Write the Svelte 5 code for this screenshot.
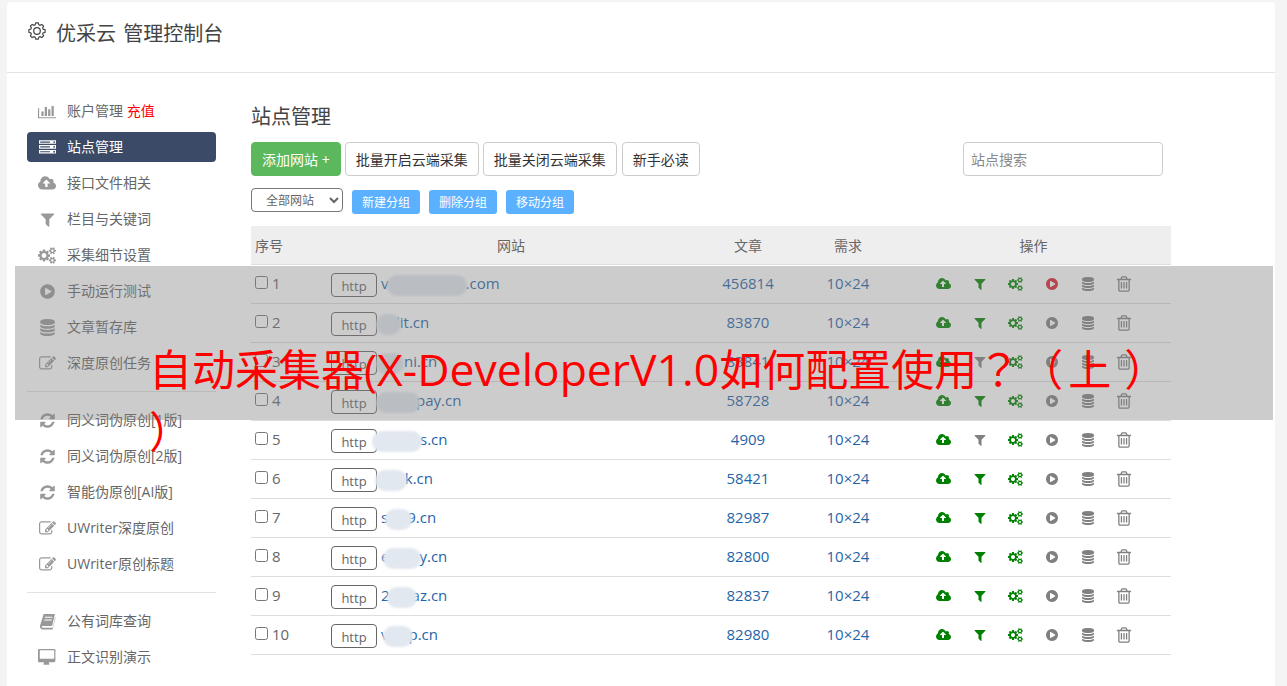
<script>
  const icons = {
    chart: ['0 0 2048 1792', 'M640 896v512h-256v-512h256zm384-512v1024h-256v-1024h256zm1024 1152v128h-2048v-1152h128v1024h1920zm-640-896v768h-256v-768h256zm384-384v1152h-256v-1152h256z'],
    server: ['0 0 1792 1792', 'M128 1408h1024v-128h-1024v128zm0-512h1024v-128h-1024v128zm1568 448q0-40-28-68t-68-28-68 28-28 68 28 68 68 28 68-28 28-68zm-1568-960h1024v-128h-1024v128zm1568 448q0-40-28-68t-68-28-68 28-28 68 28 68 68 28 68-28 28-68zm0-512q0-40-28-68t-68-28-68 28-28 68 28 68 68 28 68-28 28-68zm96 832v384h-1792v-384h1792zm0-512v384h-1792v-384h1792zm0-512v384h-1792v-384h1792z'],
    cloud: ['0 0 1920 1792', 'M1280 864q0-14-9-23l-352-352q-9-9-23-9t-23 9l-351 351q-10 12-10 24 0 14 9 23t23 9h224v352q0 13 9.5 22.5t22.5 9.5h192q13 0 22.5-9.5t9.5-22.5v-352h224q13 0 22.5-9.5t9.5-22.5zm640 288q0 159-112.5 271.5t-271.5 112.5h-1088q-185 0-316.5-131.5t-131.5-316.5q0-130 70-240t188-165q-2-30-2-43 0-212 150-362t362-150q156 0 285.5 87t188.5 231q71-62 166-62 106 0 181 75t75 181q0 76-41 138 130 31 213.5 135.5t83.5 238.5z'],
    filter: ['0 0 1792 1792', 'M1595 295q17 41-14 70l-493 493v742q0 42-39 59-13 5-25 5-27 0-45-19l-256-256q-19-19-19-45v-486l-493-493q-31-29-14-70 17-39 59-39h1280q42 0 59 39z'],
    gears: ['0 0 1920 1792', 'M896 896q0-106-75-181t-181-75-181 75-75 181 75 181 181 75 181-75 75-181zm768 512q0-52-38-90t-90-38-90 38-38 90q0 53 37.5 90.5t90.5 37.5 90.5-37.5 37.5-90.5zm0-1024q0-52-38-90t-90-38-90 38-38 90q0 53 37.5 90.5t90.5 37.5 90.5-37.5 37.5-90.5zm-384 421v185q0 10-7 19.5t-16 10.5l-155 24q-11 35-32 76 34 48 90 115 7 11 7 20 0 12-7 19-23 30-82.5 89.5t-78.5 59.5q-11 0-21-7l-115-90q-37 19-77 31-11 108-23 155-7 24-30 24h-186q-11 0-20-7.5t-10-17.5l-23-153q-34-10-75-31l-118 89q-7 7-20 7-11 0-21-8-144-133-144-160 0-9 7-19 10-14 41-53t47-61q-23-44-35-82l-152-24q-10-1-17-9.5t-7-19.5v-185q0-10 7-19.5t16-10.5l155-24q11-35 32-76-34-48-90-115-7-11-7-20 0-12 7-20 22-30 82-89t79-59q11 0 21 7l115 90q34-18 77-32 11-108 23-154 7-24 30-24h186q11 0 20 7.5t10 17.5l23 153q34 10 75 31l118-89q8-7 20-7 11 0 21 8 144 133 144 160 0 8-7 19-12 16-42 54t-45 60q23 48 34 82l152 23q10 2 17 10.5t7 19.5zm640 533v140q0 16-149 31-12 27-30 52 51 113 51 138 0 4-4 7-122 71-124 71-8 0-46-47t-52-68q-20 2-30 2t-30-2q-14 21-52 68t-46 47q-2 0-124-71-4-3-4-7 0-25 51-138-18-25-30-52-149-15-149-31v-140q0-16 149-31 13-29 30-52-51-113-51-138 0-4 4-7 4-2 35-20t59-34 30-16q8 0 46 46.5t52 67.5q20-2 30-2t30 2q51-71 92-112l6-2q4 0 124 70 4 3 4 7 0 25-51 138 17 23 30 52 149 15 149 31zm0-1024v140q0 16-149 31-12 27-30 52 51 113 51 138 0 4-4 7-122 71-124 71-8 0-46-47t-52-68q-20 2-30 2t-30-2q-14 21-52 68t-46 47q-2 0-124-71-4-3-4-7 0-25 51-138-18-25-30-52-149-15-149-31v-140q0-16 149-31 13-29 30-52-51-113-51-138 0-4 4-7 4-2 35-20t59-34 30-16q8 0 46 46.5t52 67.5q20-2 30-2t30 2q51-71 92-112l6-2q4 0 124 70 4 3 4 7 0 25-51 138 17 23 30 52 149 15 149 31z'],
    play: ['0 0 1792 1792', 'M896 128q209 0 385.5 103t279.5 279.5 103 385.5-103 385.5-279.5 279.5-385.5 103-385.5-103-279.5-279.5-103-385.5 103-385.5 279.5-279.5 385.5-103zm384 823q32-18 32-55t-32-55l-544-320q-31-19-64-1-32 19-32 56v640q0 37 32 56 16 8 32 8 17 0 32-9z'],
    db: ['0 0 1792 1792', 'M896 768q237 0 443-43t325-127v170q0 69-103 128t-280 93.5-385 34.5-385-34.5-280-93.5-103-128v-170q119 84 325 127t443 43zm0 768q237 0 443-43t325-127v170q0 69-103 128t-280 93.5-385 34.5-385-34.5-280-93.5-103-128v-170q119 84 325 127t443 43zm0-384q237 0 443-43t325-127v170q0 69-103 128t-280 93.5-385 34.5-385-34.5-280-93.5-103-128v-170q119 84 325 127t443 43zm0-1152q208 0 385 34.5t280 93.5 103 128v128q0 69-103 128t-280 93.5-385 34.5-385-34.5-280-93.5-103-128v-128q0-69 103-128t280-93.5 385-34.5z'],
    trash: ['0 0 1792 1792', 'M704 736v576q0 14-9 23t-23 9h-64q-14 0-23-9t-9-23v-576q0-14 9-23t23-9h64q14 0 23 9t9 23zm256 0v576q0 14-9 23t-23 9h-64q-14 0-23-9t-9-23v-576q0-14 9-23t23-9h64q14 0 23 9t9 23zm256 0v576q0 14-9 23t-23 9h-64q-14 0-23-9t-9-23v-576q0-14 9-23t23-9h64q14 0 23 9t9 23zm128 724v-948h-896v948q0 22 7 40.5t14.5 27 10.5 8.5h832q3 0 10.5-8.5t14.5-27 7-40.5zm-672-1076h448l-48-117q-7-9-17-11h-317q-10 2-17 11zm928 32v64q0 14-9 23t-23 9h-96v948q0 83-47 143.5t-113 60.5h-832q-66 0-113-58.5t-47-141.5v-952h-96q-14 0-23-9t-9-23v-64q0-14 9-23t23-9h309l70-167q15-37 54-63t79-26h320q40 0 79 26t54 63l70 167h309q14 0 23 9t9 23z'],
    refresh: ['0 0 1792 1792', 'M1639 1056q0 5-1 7-64 268-268 434.5t-478 166.5q-146 0-282.5-55t-243.5-157l-129 129q-19 19-45 19t-45-19-19-45v-448q0-26 19-45t45-19h448q26 0 45 19t19 45-19 45l-137 137q71 66 161 102t187 36q134 0 250-65t186-179q11-17 53-117 8-23 30-23h192q13 0 22.5 9.5t9.5 22.5zm25-800v448q0 26-19 45t-45 19h-448q-26 0-45-19t-19-45 19-45l138-138q-148-137-349-137-134 0-250 65t-186 179q-11 17-53 117-8 23-30 23h-199q-13 0-22.5-9.5t-9.5-22.5v-7q65-268 270-434.5t480-166.5q146 0 284 55.5t245 156.5l130-129q19-19 45-19t45 19 19 45z'],
    edit: ['0 0 1792 1792', 'M888 1184l116-116-152-152-116 116v56h96v96h56zm440-720q-16-16-33 1l-350 350q-17 17-1 33t33-1l350-350q17-17 1-33zm80 594v190q0 119-84.5 203.5t-203.5 84.5h-832q-119 0-203.5-84.5t-84.5-203.5v-832q0-119 84.5-203.5t203.5-84.5h832q63 0 117 25 15 7 18 23 3 17-9 29l-49 49q-14 14-32 8-23-6-45-6h-832q-66 0-113 47t-47 113v832q0 66 47 113t113 47h832q66 0 113-47t47-113v-126q0-13 9-22l64-64q15-15 35-7t20 29zm-96-738l288 288-672 672h-288v-288zm444 132l-92 92-288-288 92-92q28-28 68-28t68 28l152 152q28 28 28 68t-28 68z'],
    book: ['0 0 16 16', 'M4.4 1H15l-2.5 10.6q-.2.7-1 .7H3.6q-1.2 0-1 .9.1.7 1.1.7h8.6q.6 0 .8-.6L15.2 4l.4.3-2.6 10.5q-.2.7-1 .7H3.2Q1.4 15.500 1 13.500q-.2-1 .1-2zM5.700 3.500l-.3 1h7l.3-1zM5.100 6l-.3 1h7l.3-1z'],
    desktop: ['0 0 1920 1792', 'M1728 992v-832q0-13-9.500-22.500t-22.500-9.500h-1472q-13 0-22.500 9.500t-9.500 22.500v832q0 13 9.500 22.500t22.500 9.500h1472q13 0 22.500-9.500t9.500-22.500zm128-832v1088q0 66-47 113t-113 47h-544q0 37 16 77.500t32 71 16 43.500q0 26-19 45t-45 19h-512q-26 0-45-19t-19-45q0-14 16-44t32-70 16-78h-544q-66 0-113-47t-47-113v-1088q0-66 47-113t113-47h1632q66 0 113 47t47 113z']
  };

  // Outline of the header's eight-toothed gear
  const gearPath = (() => {
    const c = 9, pts = [];
    for (let i = 0; i < 8; i++) {
      const a = (i * Math.PI) / 4;
      [[-0.3, 6.4], [-0.15, 8.2], [0.15, 8.2], [0.3, 6.4]].forEach(([da, r]) => {
        pts.push((c + r * Math.cos(a + da)).toFixed(2) + ' ' + (c + r * Math.sin(a + da)).toFixed(2));
      });
    }
    return 'M' + pts.join('L') + 'Z';
  })();

  const navA = [
    ['cloud', '接口文件相关'], ['filter', '栏目与关键词'], ['gears', '采集细节设置'],
    ['play', '手动运行测试'], ['db', '文章暂存库'], ['edit', '深度原创任务']
  ];
  const navB = [
    ['refresh', '同义词伪原创[1版]'], ['refresh', '同义词伪原创[2版]'], ['refresh', '智能伪原创[AI版]'],
    ['edit', 'UWriter深度原创'], ['edit', 'UWriter原创标题']
  ];
  const navC = [['book', '公有词库查询'], ['desktop', '正文识别演示']];

  // pre-text, blob margin-left, blob width, blob margin-right, post-text, article count, filter on, play running
  const rows = [
    ['v', -2, 80, -1, '.com', '456814', true, true],
    ['', -5, 25, -5, 'lit.cn', '83870', true, false],
    ['', -5, 28, 0, 'ni.cn', '83841', false, false],
    ['', -5, 44, -4, 'pay.cn', '58728', true, false],
    ['', -9, 50, -2, 's.cn', '4909', false, false],
    ['', -6, 32, -6, 'ik.cn', '58421', true, false],
    ['sf', -8, 27, -5, '9.cn', '82987', true, false],
    ['e', -6, 38, -2, 'y.cn', '82800', true, false],
    ['2', -3, 30, -5, 'az.cn', '82837', true, false],
    ['v', -6, 30, -4, 'p.cn', '82980', true, false]
  ];
</script>

{#snippet ic(name, cls = '')}
  <svg class="ic {cls}" viewBox={icons[name][0]} aria-hidden="true"><path d={icons[name][1]} /></svg>
{/snippet}

{#snippet navItem(item)}
  <li class="nav-item">
    <span class="nav-ic">{@render ic(item[0], 'side')}</span>
    <span class="nav-label">{item[1]}</span>
  </li>
{/snippet}

<div class="page">
  <div class="panel">
    <header class="top">
      <svg class="gear" viewBox="0 0 18 18" aria-hidden="true">
        <path d={gearPath} />
        <circle cx="9" cy="9" r="3.300" />
      </svg>
      <h1>优采云 管理控制台</h1>
    </header>

    <div class="body">
      <aside class="side-col">
        <ul>
          <li class="nav-item">
            <span class="nav-ic">{@render ic('chart', 'side')}</span>
            <span class="nav-label">账户管理 <em>充值</em></span>
          </li>
          <li class="nav-item active">
            <span class="nav-ic">{@render ic('server', 'side')}</span>
            <span class="nav-label">站点管理</span>
          </li>
          {#each navA as item}{@render navItem(item)}{/each}
        </ul>
        <hr />
        <ul>
          {#each navB as item}{@render navItem(item)}{/each}
        </ul>
        <hr />
        <ul>
          {#each navC as item}{@render navItem(item)}{/each}
        </ul>
      </aside>

      <main class="main">
        <h2>站点管理</h2>
        <div class="toolbar">
          <button class="btn add">添加网站 +</button>
          <button class="btn">批量开启云端采集</button>
          <button class="btn">批量关闭云端采集</button>
          <button class="btn read">新手必读</button>
          <input class="search" placeholder="站点搜索" />
        </div>
        <div class="groups">
          <select class="group-select"><option>全部网站</option></select>
          <button class="mini">新建分组</button>
          <button class="mini">删除分组</button>
          <button class="mini">移动分组</button>
        </div>
        <table>
          <colgroup>
            <col class="c1" /><col class="c2" /><col class="c3" /><col class="c4" /><col class="c5" />
          </colgroup>
          <thead>
            <tr>
              <th class="left">序号</th><th>网站</th><th>文章</th><th>需求</th><th>操作</th>
            </tr>
          </thead>
          <tbody>
            {#each rows as r, i}
              <tr>
                <td class="left"><label class="idx"><input type="checkbox" /><span>{i + 1}</span></label></td>
                <td class="site">
                  <span class="http">http</span><a class="domain" href="#top">{r[0]}<span class="blob" style="margin-left:{r[1]}px;width:{r[2]}px;margin-right:{r[3]}px"></span>{r[4]}</a>
                </td>
                <td class="num">{r[5]}</td>
                <td class="num">10×24</td>
                <td>
                  <div class="ops">
                    <span class="op green">{@render ic('cloud')}</span>
                    <span class="op" class:green={r[6]}>{@render ic('filter')}</span>
                    <span class="op green">{@render ic('gears')}</span>
                    <span class="op" class:red={r[7]}>{@render ic('play')}</span>
                    <span class="op">{@render ic('db')}</span>
                    <span class="op">{@render ic('trash', 'tall')}</span>
                  </div>
                </td>
              </tr>
            {/each}
          </tbody>
        </table>
      </main>
    </div>
  </div>

  <div class="banner">
    <div class="banner-text">自动采集器<span class="latin">(X-DeveloperV1.0</span>如何配置使用<span class="tc">？</span><span class="open">（</span><span class="mid">上</span>）<br />）</div>
  </div>
</div>

<style>
  :global(body) {
    margin: 0;
    background: #f4f4f4;
    font-family: "Open Sans", "Noto Sans CJK SC", sans-serif;
    font-size: 14px;
    color: #666;
  }
  .page {
    position: relative;
    height: 686px;
    overflow: hidden;
    padding: 2px 12px 0 7px;
    box-sizing: border-box;
  }
  .panel {
    background: #fff;
    border-radius: 4px 4px 0 0;
    height: 684px;
  }
  .top {
    height: 71px;
    box-sizing: border-box;
    border-bottom: 1px solid #e4e4e4;
    display: flex;
    align-items: flex-start;
    gap: 10px;
    padding: 18px 0 0 21px;
    color: #444;
  }
  .gear {
    width: 18px;
    height: 18px;
    margin-top: 2px;
    fill: none;
    stroke: #444;
    stroke-width: 1.200;
  }
  h1 {
    margin: 0;
    font-size: 20px;
    font-weight: 400;
    line-height: 28px;
    word-spacing: 2px;
    color: #444;
  }
  .body {
    display: flex;
    padding: 23px 0 0 20px;
  }
  .side-col {
    width: 189px;
    flex: none;
    margin-right: 35px;
  }
  ul {
    list-style: none;
    margin: 0;
    padding: 0;
  }
  .nav-item {
    height: 30px;
    margin-bottom: 6px;
    display: flex;
    align-items: center;
    padding-left: 11px;
    border-radius: 4px;
    color: #666;
  }
  .nav-label {
    padding-bottom: 2px;
  }
  .nav-ic {
    width: 18px;
    margin-right: 11px;
    display: flex;
    justify-content: center;
    color: #999;
  }
  .nav-item em {
    font-style: normal;
    color: #f00;
  }
  .active {
    background: #3a4a67;
    color: #fff;
  }
  .active .nav-ic {
    color: #fff;
  }
  hr {
    border: 0;
    border-top: 1px solid #e2e2e2;
    margin: 13px 0;
  }
  .ic {
    height: 14px;
    width: auto;
    fill: currentColor;
    display: block;
  }
  .ic.side {
    height: 17px;
  }
  .ic.tall {
    height: 18px;
  }
  .main {
    width: 920px;
    flex: none;
  }
  h2 {
    margin: 0 0 4px;
    font-size: 20px;
    font-weight: 400;
    line-height: 42px;
    color: #444;
  }
  .toolbar {
    display: flex;
    gap: 4px;
    width: 912px;
    height: 34px;
  }
  button {
    font-family: inherit;
    cursor: pointer;
  }
  .btn {
    height: 34px;
    padding: 0 10px;
    border: 1px solid #ccc;
    border-radius: 4px;
    background: #fff;
    color: #333;
    font-size: 14px;
  }
  .read {
    margin-left: 1px;
  }
  .add {
    background: #5cb85c;
    border-color: #5cb85c;
    color: #fff;
  }
  .search {
    margin-left: auto;
    width: 200px;
    height: 34px;
    box-sizing: border-box;
    padding: 0 7px;
    border: 1px solid #ccc;
    border-radius: 4px;
    font-family: inherit;
    font-size: 14px;
    color: #555;
  }
  .search::placeholder {
    color: #888;
  }
  .groups {
    display: flex;
    align-items: flex-start;
    gap: 9px;
    margin: 12px 0;
    height: 26px;
  }
  .group-select {
    width: 92px;
    height: 24px;
    box-sizing: border-box;
    padding-left: 10px;
    border: 1px solid #777;
    border-radius: 4px;
    background: #fff;
    color: #666;
    font-family: inherit;
    font-size: 12px;
  }
  .mini {
    width: 68px;
    height: 24px;
    margin-top: 2px;
    padding: 0;
    border: 0;
    border-radius: 3px;
    background: #5bb0ff;
    color: #fff;
    font-size: 12px;
  }
  table {
    width: 920px;
    table-layout: fixed;
    border-collapse: separate;
    border-spacing: 0;
  }
  .c1 { width: 75px; }
  .c2 { width: 370px; }
  .c3 { width: 104px; }
  .c4 { width: 96px; }
  th {
    height: 39px;
    box-sizing: border-box;
    padding: 0 4px;
    background: #eee;
    border-bottom: 1px solid #ddd;
    font-weight: 400;
    font-size: 14px;
    color: #666;
    text-align: center;
  }
  td {
    height: 39px;
    box-sizing: border-box;
    padding: 0;
    border-bottom: 1px solid #ddd;
    text-align: center;
  }
  .left {
    text-align: left;
    padding-left: 4px;
  }
  .idx {
    display: flex;
    align-items: center;
    gap: 4px;
    margin-top: -3px;
    font-size: 15px;
  }
  .idx input {
    margin: 0;
    width: 13px;
    height: 13px;
  }
  .site {
    text-align: left;
    padding: 1px 0 0 5px;
    white-space: nowrap;
  }
  .http {
    display: inline-block;
    width: 46px;
    height: 24px;
    box-sizing: border-box;
    border: 1px solid #666;
    border-radius: 4px;
    text-align: center;
    line-height: 25px;
    font-size: 13px;
    color: #666;
    vertical-align: middle;
    margin-right: 4px;
  }
  .domain {
    color: #1f64a8;
    text-decoration: none;
    font-size: 15px;
    vertical-align: -1px;
  }
  .blob {
    display: inline-block;
    height: 21px;
    vertical-align: middle;
    border-radius: 10px;
    background: #e2e8ef;
    filter: blur(1px);
    position: relative;
  }
  .num {
    color: #1f64a8;
    font-size: 15px;
    padding-bottom: 2px;
  }
  .ops {
    display: flex;
    justify-content: center;
  }
  .op {
    width: 36px;
    height: 18px;
    display: flex;
    align-items: center;
    justify-content: center;
    color: #808080;
  }
  .green {
    color: #008000;
  }
  .red {
    color: #d9232e;
  }
  .banner {
    position: absolute;
    left: 15px;
    top: 266px;
    width: 1258px;
    height: 154px;
    box-sizing: border-box;
    padding: 70px 0 0 134px;
    background: rgba(128, 128, 128, 0.4);
  }
  .banner-text {
    font-size: 43px;
    line-height: 62px;
    color: #f00;
    white-space: nowrap;
    text-spacing-trim: space-all;
  }
  .latin {
    font-size: 44.500px;
  }
  .tc {
    font-family: "Noto Sans CJK TC", sans-serif;
  }
  .open {
    margin-right: 5px;
  }
  .mid {
    margin-right: 13px;
  }
</style>
